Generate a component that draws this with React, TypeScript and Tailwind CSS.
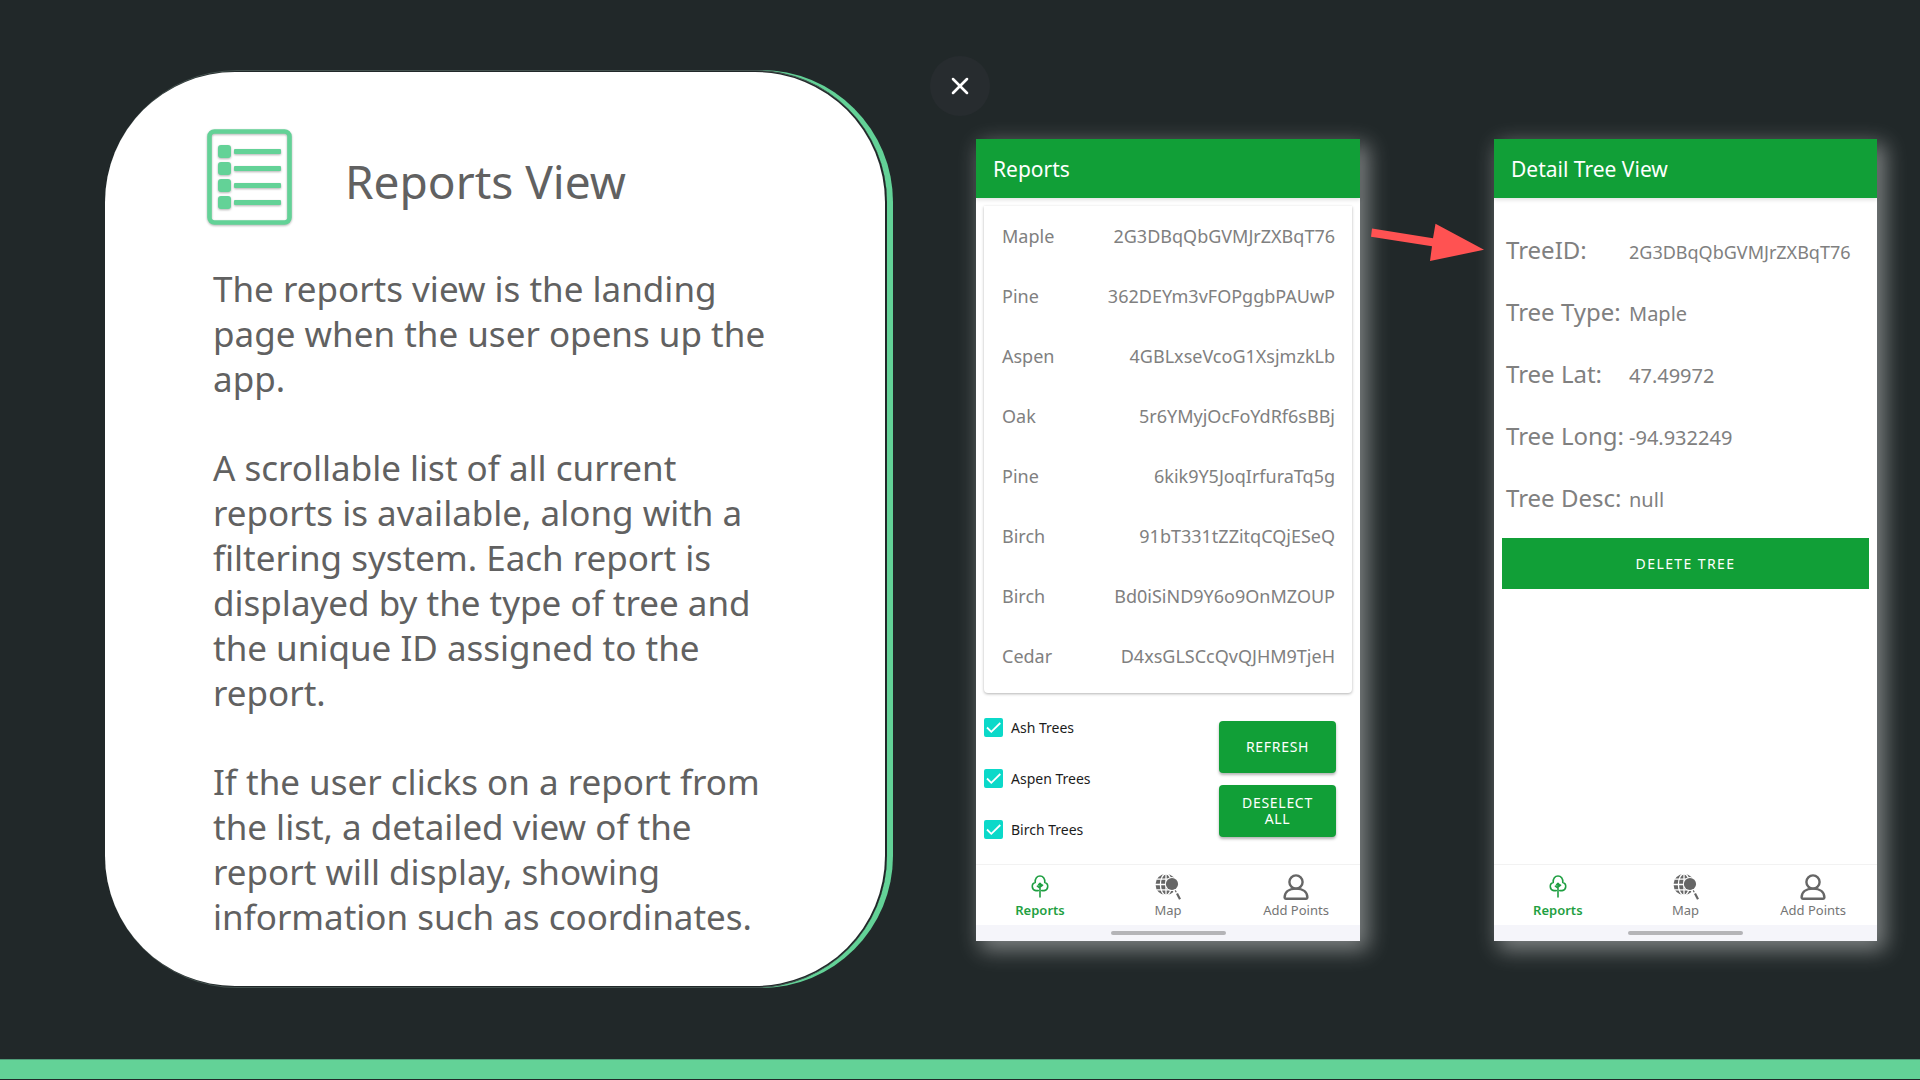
import { useState, type ReactNode } from "react";
import { X } from "lucide-react";

const REPORTS = [
  { type: "Maple", id: "2G3DBqQbGVMJrZXBqT76" },
  { type: "Pine", id: "362DEYm3vFOPggbPAUwP" },
  { type: "Aspen", id: "4GBLxseVcoG1XsjmzkLb" },
  { type: "Oak", id: "5r6YMyjOcFoYdRf6sBBj" },
  { type: "Pine", id: "6kik9Y5JoqIrfuraTq5g" },
  { type: "Birch", id: "91bT331tZZitqCQjESeQ" },
  { type: "Birch", id: "Bd0iSiND9Y6o9OnMZOUP" },
  { type: "Cedar", id: "D4xsGLSCcQvQJHM9TjeH" },
];

const FILTERS = ["Ash Trees", "Aspen Trees", "Birch Trees"];

const DETAILS = [
  { label: "TreeID:", value: "2G3DBqQbGVMJrZXBqT76", size: "text-[18px]" },
  { label: "Tree Type:", value: "Maple", size: "text-[20px]" },
  { label: "Tree Lat:", value: "47.49972", size: "text-[20px]" },
  { label: "Tree Long:", value: "-94.932249", size: "text-[20px]" },
  { label: "Tree Desc:", value: "null", size: "text-[20px]" },
];

function ReportIcon() {
  const rows = [16, 33, 50, 67];
  return (
    <svg
      width="86"
      height="97"
      viewBox="0 0 86 97"
      fill="#63d297"
      aria-hidden="true"
      className="shrink-0 drop-shadow-[0_1px_1px_rgba(0,0,0,0.3)]"
    >
      <rect x="2.5" y="2.5" width="80" height="91" rx="5" fill="none" stroke="#63d297" strokeWidth="4.6" />
      {rows.map((y) => (
        <g key={y}>
          <rect x="11" y={y} width="13" height="13" rx="3" />
          <rect x="27" y={y + 4} width="47" height="5" rx="1" />
        </g>
      ))}
    </svg>
  );
}

function TreeIcon() {
  return (
    <svg
      width="26"
      height="26"
      viewBox="0 0 26 26"
      fill="none"
      stroke="currentColor"
      strokeWidth="1.6"
      strokeLinecap="round"
      strokeLinejoin="round"
      aria-hidden="true"
    >
      <path d="M11.3 16.6H8.9A4.1 4.1 0 0 1 8.2 8.6C7.9 4.6 10 2 13 2s5.1 2.6 4.8 6.6A4.1 4.1 0 0 1 17.1 16.6H14.7" />
      <path d="M13 9.5V23M10.4 12.2l2.6 2M15.6 11.2l-2.6 2M11.6 10.8L13 9.3l1.4 1.5" />
    </svg>
  );
}

function MapIcon() {
  return (
    <svg width="26" height="26" viewBox="0 0 26 26" fill="none" aria-hidden="true">
      <circle cx="11" cy="10.5" r="10.5" fill="#666" />
      <g stroke="#fff" strokeWidth="1.3">
        <path d="M11 0v21M0 10.5h22M1.5 5.2h19M1.5 15.8h19" />
        <ellipse cx="11" cy="10.5" rx="5.6" ry="10.6" />
      </g>
      <circle cx="17" cy="10" r="7" fill="#fff" />
      <circle cx="17" cy="10" r="6.1" fill="#666" />
      <path d="M19.6 15.5l5.2 9.8" stroke="#fff" strokeWidth="4.4" />
      <path d="M20.2 16.4l1 1.8" stroke="#666" strokeWidth="1.2" />
      <path d="M22 19.6l3 5.6" stroke="#666" strokeWidth="2.2" />
    </svg>
  );
}

function PersonIcon() {
  return (
    <svg
      width="26"
      height="26"
      viewBox="0 0 26 26"
      fill="none"
      stroke="#666"
      strokeWidth="2.4"
      strokeLinejoin="round"
      aria-hidden="true"
    >
      <circle cx="13" cy="8" r="6.6" />
      <path d="M1.6 23.6C1.6 18.6 5.4 14.6 13 14.6s11.4 4 11.4 9c0 .8-.5 1.2-1.2 1.2H2.8c-.7 0-1.2-.4-1.2-1.2z" />
    </svg>
  );
}

function TabLink({ icon, text, active }: { icon: ReactNode; text: string; active?: boolean }) {
  return (
    <a
      href="#"
      aria-current={active ? "page" : undefined}
      className={
        active
          ? "flex flex-1 flex-col items-center pt-[9px] text-[13px] leading-4 font-semibold text-[#1f9f42]"
          : "flex flex-1 flex-col items-center pt-[9px] text-[13px] leading-4 text-[#757575]"
      }
    >
      {icon}
      <span className="mt-0.5">{text}</span>
    </a>
  );
}

function Phone({ title, children }: { title: string; children: ReactNode }) {
  return (
    <section className="mt-[69px] flex min-h-[802px] min-w-0 flex-col self-start bg-white shadow-[6px_7px_20px_2px_rgba(255,255,255,0.42)]">
      <header className="flex h-[59px] shrink-0 items-center bg-[#119f37] px-[17px] shadow-[0_2px_4px_rgba(0,0,0,0.12)]">
        <h2 className="text-[21px] leading-7 text-white">{title}</h2>
      </header>
      {children}
      <nav className="flex h-[61px] shrink-0 border-t border-[#f2f2f2]">
        <TabLink active icon={<TreeIcon />} text="Reports" />
        <TabLink icon={<MapIcon />} text="Map" />
        <TabLink icon={<PersonIcon />} text="Add Points" />
      </nav>
      <div className="flex h-4 shrink-0 items-center justify-center bg-[#f5f5fa]">
        <span className="h-1 w-[115px] rounded-full bg-[#b4b4b7]" />
      </div>
    </section>
  );
}

function Filter({ name }: { name: string }) {
  const [on, setOn] = useState(true);
  return (
    <label className="flex h-[51px] items-center gap-2 text-[14px] text-[#1c1c1c]">
      <span className="relative flex">
        <input
          type="checkbox"
          checked={on}
          onChange={(e) => setOn(e.target.checked)}
          className="size-[19px] appearance-none rounded-xs border-2 border-[#757575] checked:border-[#0bd9c9] checked:bg-[#0bd9c9]"
        />
        {on && (
          <svg
            viewBox="0 0 19 19"
            fill="none"
            stroke="#fff"
            strokeWidth="1.8"
            aria-hidden="true"
            className="pointer-events-none absolute inset-0"
          >
            <path d="M3 9.5l4.3 4.3L16.3 5" />
          </svg>
        )}
      </span>
      {name}
    </label>
  );
}

function ReportsPhone() {
  return (
    <Phone title="Reports">
      <div className="mx-2 mt-2 rounded-b-sm pb-[7px] shadow-[0_1px_3px_rgba(0,0,0,0.3)]">
        <table className="w-full text-[18px] text-[#808080]">
          <tbody>
            {REPORTS.map((r) => (
              <tr key={r.id} className="h-[60px]">
                <td className="pl-[18px]">{r.type}</td>
                <td className="pr-[17px] text-right">{r.id}</td>
              </tr>
            ))}
          </tbody>
        </table>
      </div>
      <div className="flex flex-1 items-start justify-between pr-6 pl-2">
        <div className="pt-[9px]">
          {FILTERS.map((f) => (
            <Filter key={f} name={f} />
          ))}
        </div>
        <div className="flex w-[117px] flex-col gap-3 pt-7">
          <button className="h-[52px] rounded-sm bg-[#119f37] text-[14px] leading-4 tracking-wider text-white uppercase shadow-[0_2px_3px_rgba(0,0,0,0.3)]">
            Refresh
          </button>
          <button className="h-[52px] rounded-sm bg-[#119f37] px-4 text-[14px] leading-4 tracking-wider text-white uppercase shadow-[0_2px_3px_rgba(0,0,0,0.3)]">
            Deselect All
          </button>
        </div>
      </div>
    </Phone>
  );
}

function DetailPhone() {
  return (
    <Phone title="Detail Tree View">
      <div className="flex-1 pt-[21px]">
        <dl className="pl-3 text-[#808080]">
          {DETAILS.map((d) => (
            <div key={d.label} className="grid h-[62px] grid-cols-[123px_1fr] items-baseline leading-[62px]">
              <dt className="text-[24px]">{d.label}</dt>
              <dd className={d.size}>{d.value}</dd>
            </div>
          ))}
        </dl>
        <div className="mt-[9px] flex px-2">
          <button className="h-[51px] flex-1 bg-[#119f37] text-[14px] leading-4 tracking-widest text-white uppercase">
            Delete Tree
          </button>
        </div>
      </div>
    </Phone>
  );
}

export default function App() {
  return (
    <div className="relative flex min-h-screen flex-col bg-[#212829] pb-px font-['Noto_Sans',sans-serif]">
      <main className="grid flex-1 grid-cols-[788fr_83fr_384fr_134fr_383fr] pt-[70px] pr-[43px] pl-[105px]">
        <article className="self-start rounded-[132px] bg-[linear-gradient(to_right,transparent_50%,#63d297_50%)] pr-[6px]">
          <div className="rounded-[132px] border-y border-[#43514e] bg-[#212829] py-px pr-[2px]">
            <div className="rounded-[130px] bg-white pt-[57px] pr-[105px] pb-[47px] pl-[102px] text-[#616161]">
              <div className="flex items-center gap-[52px]">
                <ReportIcon />
                <h1 className="pt-[6px] text-[46px] leading-[60px]">Reports View</h1>
              </div>
              <div className="mt-10 flex flex-col gap-11 pl-[6px] text-[35px] leading-[45px]">
                <p>The reports view is the landing page when the user opens up the app.</p>
                <p>
                  A scrollable list of all current reports is available, along with a filtering system. Each
                  report is displayed by the type of tree and the unique ID assigned to the report.
                </p>
                <p>
                  If the user clicks on a report from the list, a detailed view of the report will display,
                  showing information such as coordinates.
                </p>
              </div>
            </div>
          </div>
        </article>
        <div />
        <ReportsPhone />
        <svg
          width="113"
          height="39"
          viewBox="0 0 113 39"
          fill="#ff5252"
          aria-hidden="true"
          className="mt-[153px] justify-self-center"
        >
          <path d="M1 5.5L62 15.3L64.5.7L113 26.8L59 38L61 23.3L0 13.8z" />
        </svg>
        <DetailPhone />
      </main>
      <footer className="h-5 border-t border-[#4f9c78] bg-[#63d297]" />
      <button
        aria-label="Close"
        className="absolute top-14 left-1/2 flex size-[60px] -translate-x-1/2 items-center justify-center rounded-full bg-[#272c2f] text-white"
      >
        <X size={28} strokeWidth={2.2} />
      </button>
    </div>
  );
}
